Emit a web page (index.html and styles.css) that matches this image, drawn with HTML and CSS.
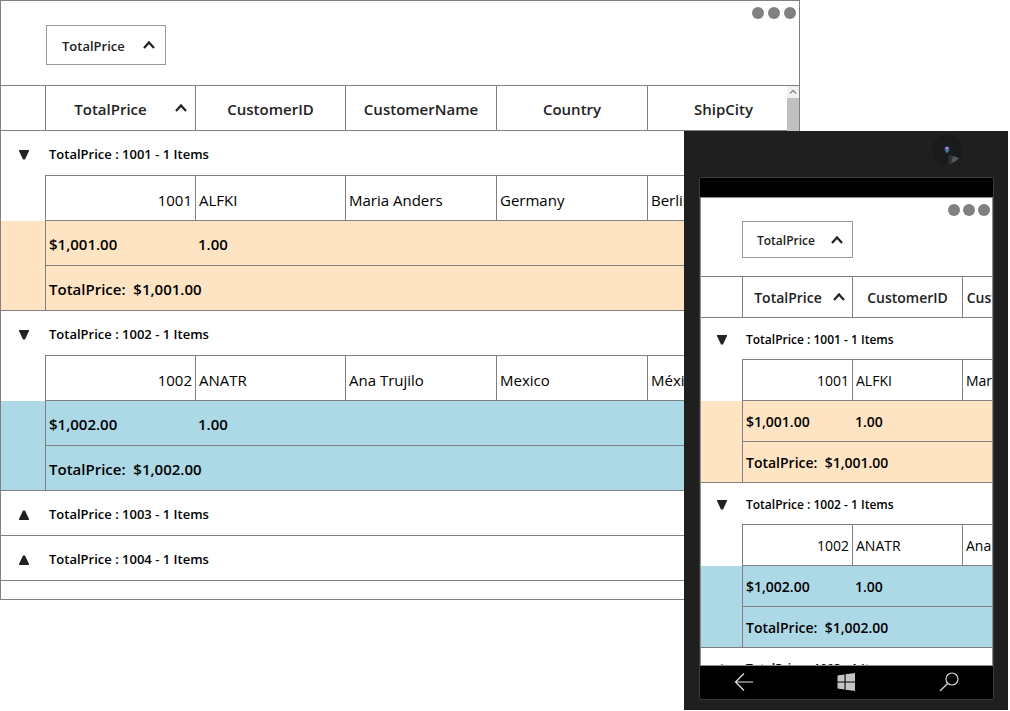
FILE: index.html
```html
<!DOCTYPE html>
<html lang="en">
<head>
<meta charset="utf-8">
<title>Grouped orders grid</title>
<link rel="stylesheet" href="styles.css">
</head>
<body>
<svg class="defs" aria-hidden="true">
  <symbol id="sort-up" viewBox="0 0 12 10"><path d="M1 8 6 2.500 11 8" fill="none" stroke="currentColor" stroke-width="2.200"/></symbol>
  <symbol id="tri-down" viewBox="0 0 10 10"><path d="M0 0h10v1L6 9.500H4L0 1z" fill="currentColor"/></symbol>
  <symbol id="tri-up" viewBox="0 0 10 10"><path d="M0 10h10V9L6 .5H4L0 9z" fill="currentColor"/></symbol>
</svg>
<main class="stage">
  <section class="desktop grid-view" aria-label="Desktop view">
    <div class="group-panel">
      <button class="group-chip" type="button"><span>TotalPrice</span><svg class="sort"><use href="#sort-up"/></svg></button>
      <div class="dots" aria-hidden="true"><i></i><i></i><i></i></div>
    </div>
    <table class="grid">
      <colgroup><col class="indent-col"><col class="key-col"><col class="key-col"><col class="info-col"><col class="info-col"><col></colgroup>
      <thead>
        <tr>
          <td></td>
          <th scope="col"><button class="sorted" type="button"><span>TotalPrice</span><svg class="sort"><use href="#sort-up"/></svg></button></th>
          <th scope="col">CustomerID</th><th scope="col">CustomerName</th><th scope="col">Country</th><th scope="col">ShipCity</th>
        </tr>
      </thead>
      <tbody>
        <tr class="caption"><td class="expander"><button type="button" aria-label="Collapse 1001"><svg><use href="#tri-down"/></svg></button></td><td colspan="5">TotalPrice : 1001 - 1 Items</td></tr>
        <tr class="record"><td></td><td class="num">1001</td><td>ALFKI</td><td>Maria Anders</td><td>Germany</td><td>Berlin</td></tr>
        <tr class="summary peach"><td rowspan="2"></td><td>$1,001.00</td><td colspan="4">1.00</td></tr>
        <tr class="summary peach"><td colspan="5">TotalPrice:&nbsp; $1,001.00</td></tr>
      </tbody>
      <tbody>
        <tr class="caption"><td class="expander"><button type="button" aria-label="Collapse 1002"><svg><use href="#tri-down"/></svg></button></td><td colspan="5">TotalPrice : 1002 - 1 Items</td></tr>
        <tr class="record"><td></td><td class="num">1002</td><td>ANATR</td><td>Ana Trujilo</td><td>Mexico</td><td>México D.F.</td></tr>
        <tr class="summary blue"><td rowspan="2"></td><td>$1,002.00</td><td colspan="4">1.00</td></tr>
        <tr class="summary blue"><td colspan="5">TotalPrice:&nbsp; $1,002.00</td></tr>
      </tbody>
      <tbody>
        <tr class="caption closed"><td class="expander"><button type="button" aria-label="Expand 1003"><svg><use href="#tri-up"/></svg></button></td><td colspan="5">TotalPrice : 1003 - 1 Items</td></tr>
        <tr class="caption closed"><td class="expander"><button type="button" aria-label="Expand 1004"><svg><use href="#tri-up"/></svg></button></td><td colspan="5">TotalPrice : 1004 - 1 Items</td></tr>
      </tbody>
    </table>
    <div class="scrollbar" aria-hidden="true"><svg viewBox="0 0 12 12"><path d="M3 7.500 6 4.500 9 7.500" fill="none" stroke="#888" stroke-width="1.300"/></svg></div>
  </section>

  <section class="phone" aria-label="Phone view">
    <svg class="camera" viewBox="0 0 30 30" aria-hidden="true">
      <circle cx="15" cy="15" r="15" fill="#191a1c"/>
      <path d="M17 19 27 23A14.500 14.500 0 0 1 16 29.500z" fill="#303030"/>
      <path d="M21 21 27 23A14 14 0 0 1 19 28z" fill="#555"/>
      <circle cx="15" cy="15" r="6" fill="#1b1b1f"/>
      <circle cx="15" cy="14" r="2.500" fill="#5a5aa8"/>
      <circle cx="15" cy="13" r="1" fill="#b9b4ea"/>
      <circle cx="15" cy="16.500" r="1.200" fill="#1f9aa0"/>
    </svg>
    <div class="screen">
      <div class="viewport grid-view">
        <div class="group-panel">
          <button class="group-chip" type="button"><span>TotalPrice</span><svg class="sort"><use href="#sort-up"/></svg></button>
          <div class="dots" aria-hidden="true"><i></i><i></i><i></i></div>
        </div>
        <table class="grid">
          <colgroup><col class="indent-col"><col class="key-col"><col class="key-col"><col></colgroup>
          <thead>
            <tr>
              <td></td>
              <th scope="col"><button class="sorted" type="button"><span>TotalPrice</span><svg class="sort"><use href="#sort-up"/></svg></button></th>
              <th scope="col">CustomerID</th><th scope="col">CustomerName</th>
            </tr>
          </thead>
          <tbody>
            <tr class="caption"><td class="expander"><button type="button" aria-label="Collapse 1001"><svg><use href="#tri-down"/></svg></button></td><td colspan="3">TotalPrice : 1001 - 1 Items</td></tr>
            <tr class="record"><td></td><td class="num">1001</td><td>ALFKI</td><td>Maria Anders</td></tr>
            <tr class="summary peach"><td rowspan="2"></td><td>$1,001.00</td><td colspan="2">1.00</td></tr>
            <tr class="summary peach"><td colspan="3">TotalPrice:&nbsp; $1,001.00</td></tr>
          </tbody>
          <tbody>
            <tr class="caption"><td class="expander"><button type="button" aria-label="Collapse 1002"><svg><use href="#tri-down"/></svg></button></td><td colspan="3">TotalPrice : 1002 - 1 Items</td></tr>
            <tr class="record"><td></td><td class="num">1002</td><td>ANATR</td><td>Ana Trujilo</td></tr>
            <tr class="summary blue"><td rowspan="2"></td><td>$1,002.00</td><td colspan="2">1.00</td></tr>
            <tr class="summary blue"><td colspan="3">TotalPrice:&nbsp; $1,002.00</td></tr>
          </tbody>
          <tbody>
            <tr class="caption closed"><td class="expander"><button type="button" aria-label="Expand 1003"><svg><use href="#tri-up"/></svg></button></td><td colspan="3">TotalPrice : 1003 - 1 Items</td></tr>
          </tbody>
        </table>
      </div>
      <nav class="keys" aria-label="System keys">
        <button type="button" aria-label="Back"><svg viewBox="0 0 20 20"><path d="M10 1.500 1.500 10 10 18.500M1.500 10H19" fill="none" stroke="#e4e4e4" stroke-width="1.200"/></svg></button>
        <button type="button" aria-label="Start"><svg viewBox="0 0 20 20"><path d="M.5 3.500 7.500 2.500V9.400H.5zM8.600 2.300 18 1V9.400H8.600zM.5 10.600H7.500V17.500L.5 16.500zM8.600 10.600H18V19L8.600 17.700z" fill="#c4c4c4"/></svg></button>
        <button type="button" aria-label="Search"><svg viewBox="0 0 20 20"><circle cx="13" cy="7" r="6" fill="none" stroke="#d6d6d6" stroke-width="1.200"/><path d="M8.800 11.200 1 19" stroke="#d6d6d6" stroke-width="1.300"/></svg></button>
      </nav>
    </div>
  </section>
</main>
</body>
</html>
```
FILE: styles.css
```css
* { box-sizing: border-box; }

body {
  margin: 0;
  background: #fff;
  color: #000;
  font-family: "Open Sans", "Noto Sans", sans-serif;
}

button {
  margin: 0;
  padding: 0;
  border: 0;
  background: none;
  color: #222;
  font: inherit;
}

.defs { position: absolute; width: 0; height: 0; }

.stage { display: grid; }

.desktop, .phone { grid-area: 1 / 1; }

/* Shared grid look */
.grid-view {
  --line: #808080;
  --strong: 600;
  position: relative;
  border: 1px solid var(--line);
  background: #fff;
}

.group-panel {
  display: flex;
  justify-content: space-between;
  align-items: flex-start;
}

.group-chip {
  display: flex;
  align-items: center;
  justify-content: space-between;
  border: 1px solid #999;
  font-weight: var(--strong);
}

.sort { width: 12px; height: 10px; flex: none; margin-bottom: 2px; }

.dots { display: flex; }
.dots i { border-radius: 50%; background: #808080; }

.grid {
  width: 100%;
  table-layout: fixed;
  border-collapse: separate;
  border-spacing: 0;
  border-top: 1px solid var(--line);
}

.grid th, .grid td {
  height: var(--row);
  padding: 4px 3px 0;
  border-bottom: 1px solid var(--line);
  border-left: 1px solid var(--line);
  line-height: 20px;
  text-align: left;
  white-space: nowrap;
  overflow: hidden;
}

.grid tr > :first-child { border-left-width: 0; }
.grid th { padding: 2px 0 0; color: #222; font-weight: var(--strong); text-align: center; }
.grid .num { text-align: right; }

.sorted { display: flex; align-items: center; width: 100%; font-weight: var(--strong); }
.sorted span { flex: 1; text-align: center; }

.grid .caption td { padding: 2px 4px 0; border-left: 0; font-size: 13px; font-weight: var(--strong); }
.grid .caption .expander { padding: 0; text-align: center; }
.grid .caption:not(.closed) .expander,
.grid .record td:first-child { border-bottom: 0; }
.expander svg { display: block; width: 10px; height: 10px; }
.expander button { display: inline-block; vertical-align: middle; }

.grid .summary td { padding-top: 2px; font-weight: var(--strong); }
.grid .summary td[colspan="4"], .grid .summary td[colspan="2"] { border-left: 0; }
.grid .summary td[colspan="5"], .grid .summary td[colspan="3"] { border-left: 1px solid var(--line); }
.peach td { background: #ffe4c4; }
.blue td { background: #add8e6; }

/* Desktop window */
.desktop {
  --row: 45px;
  align-self: start;
  margin-right: 210px;
  padding-bottom: 18px;
  font-size: 15px;
}

.desktop .group-panel { height: 84px; padding: 0 3px 0 45px; }
.desktop .group-chip { width: 120px; height: 40px; margin-top: 24px; padding: 2px 10px 0 15px; font-size: 13px; }
.desktop .dots { gap: 4px; padding-top: 6px; }
.desktop .dots i { width: 12px; height: 12px; }
.desktop .indent-col { width: 44px; }
.desktop .key-col { width: 150px; }
.desktop .info-col { width: 151px; }
.desktop .sorted { padding-right: 8px; }
.desktop .caption .expander { padding-left: 2px; }

.scrollbar {
  position: absolute;
  top: 85px;
  right: 0;
  bottom: 0;
  width: 12px;
  background: #c1c1c1;
}
.scrollbar svg { display: block; height: 12px; background: #f1f1f1; }

/* Phone */
.phone {
  position: relative;
  justify-self: end;
  width: 324px;
  margin: 131px 2px 0 0;
  padding: 46px 14px 10px 15px;
  background: #1f1f1f;
}

.camera { position: absolute; top: 4px; right: 46px; width: 30px; height: 30px; }

.screen {
  padding-top: 19px;
  border: 1px solid #3a3a3a;
  border-radius: 2px;
  background: #000;
}

.viewport {
  --row: 41px;
  height: 469px;
  overflow: hidden;
  border-color: #8c8c8c;
  font-size: 14px;
}

.viewport .group-panel { height: 78px; padding: 0 2px 0 41px; }
.viewport .group-chip { width: 111px; height: 37px; margin-top: 23px; padding: 2px 9px 0 14px; font-size: 12px; }
.viewport .dots { gap: 3px; padding-top: 6px; }
.viewport .dots i { width: 12px; height: 12px; }
.viewport .grid { width: 376px; }
.viewport .indent-col { width: 41px; }
.viewport .key-col { width: 110px; }
.viewport .sorted { padding-right: 7px; }
.viewport .record td { padding-top: 2px; }
.viewport .caption td { height: 42px; font-size: 12px; }
.viewport .closed td { padding-top: 0; }

.keys {
  display: flex;
  align-items: center;
  justify-content: space-between;
  height: 33px;
  padding: 0 34px 2px;
}
.keys svg { display: block; width: 20px; height: 20px; }
```
